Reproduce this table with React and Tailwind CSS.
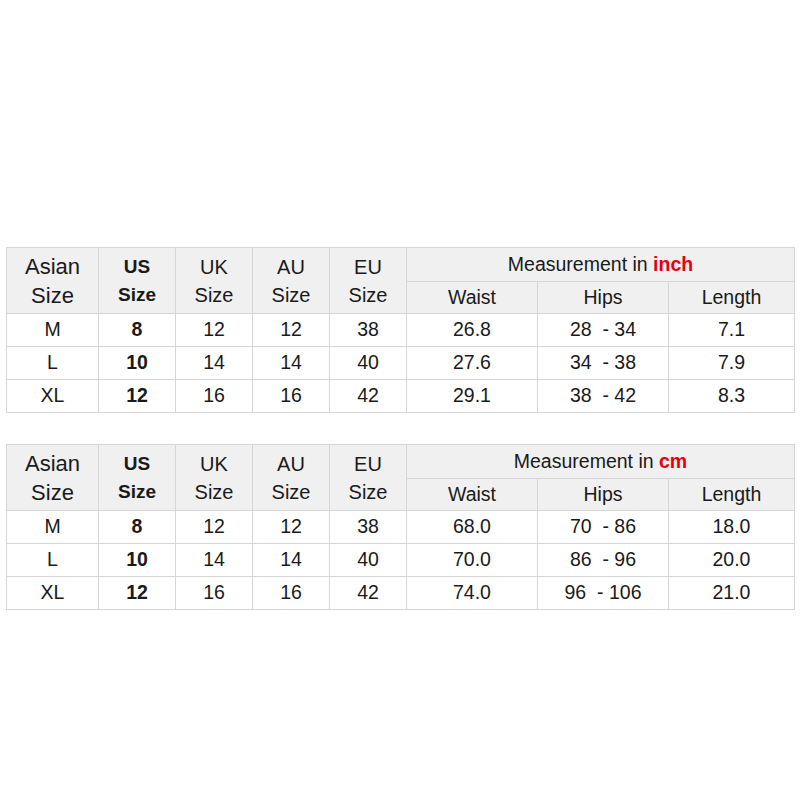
const tables = [
  {
    unit: 'inch',
    rows: [
      ['M', '8', '12', '12', '38', '26.8', '28  - 34', '7.1'],
      ['L', '10', '14', '14', '40', '27.6', '34  - 38', '7.9'],
      ['XL', '12', '16', '16', '42', '29.1', '38  - 42', '8.3'],
    ],
  },
  {
    unit: 'cm',
    rows: [
      ['M', '8', '12', '12', '38', '68.0', '70  - 86', '18.0'],
      ['L', '10', '14', '14', '40', '70.0', '86  - 96', '20.0'],
      ['XL', '12', '16', '16', '42', '74.0', '96  - 106', '21.0'],
    ],
  },
];

const widths = [92, 77, 77, 77, 77, 131, 131, 126];

function SizeTable({ unit, rows }) {
  const th = 'border border-[#d6d6d6] bg-[#f0f0f0] text-center align-middle p-0';
  const td = 'border border-[#d6d6d6] bg-white text-center align-middle p-0 h-[33px] text-[19.5px]';
  return (
    <table className="table-fixed border-collapse w-[788px] text-[#1a1a1a]">
      <colgroup>
        {widths.map((w, i) => (
          <col key={i} style={{ width: w }} />
        ))}
      </colgroup>
      <thead>
        <tr className="h-[34px]">
          <th rowSpan={2} className={`${th} font-normal text-[22px] leading-[29px]`}>Asian<br />Size</th>
          <th rowSpan={2} className={`${th} font-bold text-[19px] leading-[28px]`}>US<br />Size</th>
          <th rowSpan={2} className={`${th} font-normal text-[20px] leading-[28px]`}>UK<br />Size</th>
          <th rowSpan={2} className={`${th} font-normal text-[20px] leading-[28px]`}>AU<br />Size</th>
          <th rowSpan={2} className={`${th} font-normal text-[20px] leading-[28px]`}>EU<br />Size</th>
          <th colSpan={3} className={`${th} font-normal text-[19.5px]`}>
            Measurement in <span className="font-bold text-[#e8000e]">{unit}</span>
          </th>
        </tr>
        <tr className="h-[32px]">
          <th className={`${th} font-normal text-[19.5px]`}>Waist</th>
          <th className={`${th} font-normal text-[19.5px]`}>Hips</th>
          <th className={`${th} font-normal text-[19.5px]`}>Length</th>
        </tr>
      </thead>
      <tbody>
        {rows.map((r, i) => (
          <tr key={i}>
            {r.map((c, j) => (
              <td key={j} className={`${td} ${j === 1 ? 'font-bold' : ''} ${j === 6 ? 'whitespace-pre' : ''}`}>
                {c}
              </td>
            ))}
          </tr>
        ))}
      </tbody>
    </table>
  );
}

export default function App() {
  return (
    <div className="w-[800px] h-[800px] bg-white pt-[247px] pl-[6px] flex flex-col gap-[31px]" style={{ fontFamily: '"Liberation Sans", Arial, sans-serif' }}>
      {tables.map((t) => (
        <SizeTable key={t.unit} {...t} />
      ))}
    </div>
  );
}
